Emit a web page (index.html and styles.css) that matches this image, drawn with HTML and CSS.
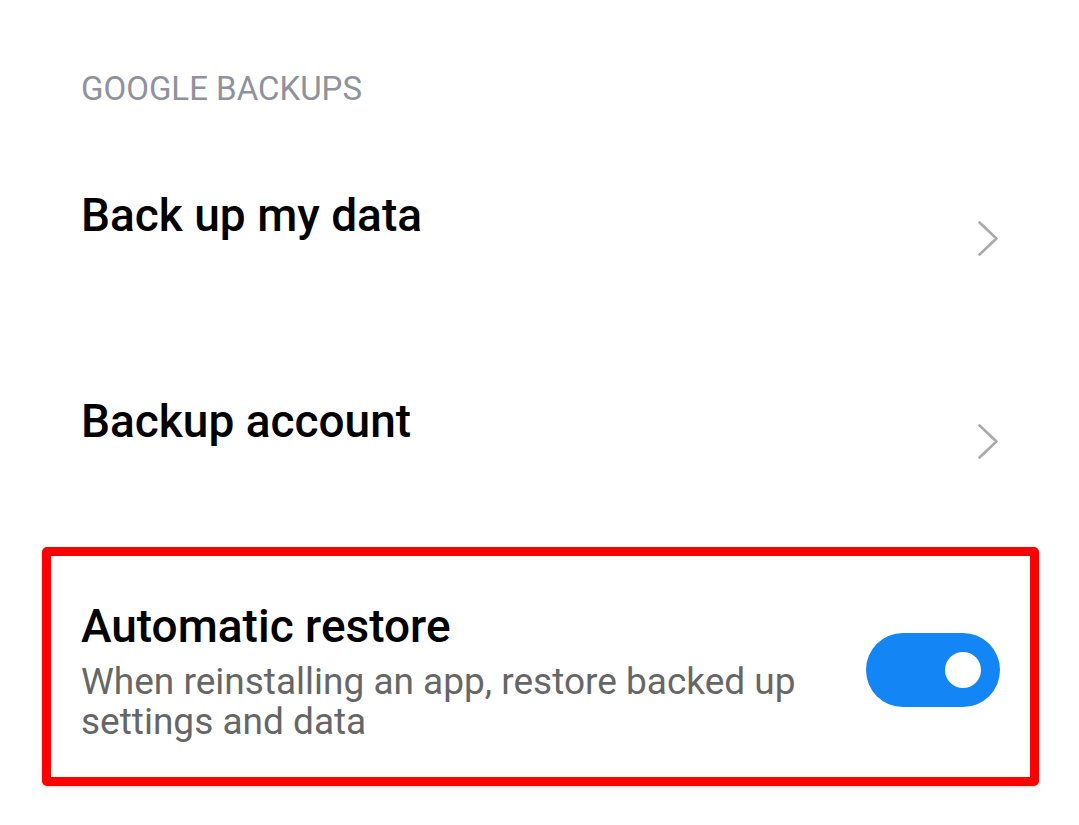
FILE: index.html
```html
<!DOCTYPE html>
<html lang="en">
<head>
<meta charset="utf-8">
<title>Google backups</title>
<link rel="stylesheet" href="styles.css">
</head>
<body>
<div class="screen">
  <div class="section-header">GOOGLE BACKUPS</div>
  <div class="row row-first">
    <div class="row-title">Back up my data</div>
    <svg class="chevron" viewBox="0 0 20 35" width="20" height="35"><polyline points="1.5,1.5 18.5,17.5 1.5,33.5" fill="none" stroke="#aaaaaa" stroke-width="2.6" stroke-linecap="round" stroke-linejoin="round"/></svg>
  </div>
  <div class="row row-second">
    <div class="row-title">Backup account</div>
    <svg class="chevron" viewBox="0 0 20 35" width="20" height="35"><polyline points="1.5,1.5 18.5,17.5 1.5,33.5" fill="none" stroke="#aaaaaa" stroke-width="2.6" stroke-linecap="round" stroke-linejoin="round"/></svg>
  </div>
  <div class="highlight">
    <div class="toggle-row">
      <div class="toggle-text">
        <div class="toggle-title">Automatic restore</div>
        <div class="toggle-sub">When reinstalling an app, restore backed up settings and data</div>
      </div>
      <div class="switch on"><span class="knob"></span></div>
    </div>
  </div>
</div>
</body>
</html>
```

FILE: styles.css
```css
html, body {
  margin: 0;
  padding: 0;
  background: #ffffff;
}
body {
  font-family: Roboto, "Noto Sans", sans-serif;
  width: 1079px;
  height: 825px;
  overflow: hidden;
}
.section-header {
  padding: 68px 81px 0;
  font-size: 33px;
  line-height: 42px;
  color: #8e929c;
}
.row {
  display: flex;
  align-items: flex-start;
  justify-content: space-between;
  padding: 0 81px;
}
.row-first {
  margin-top: 78px;
}
.row-second {
  margin-top: 138px;
}
.row-title {
  font-size: 46px;
  line-height: 54px;
  font-weight: 500;
  color: #000000;
}
.chevron {
  display: block;
  flex: none;
}
.row-first .chevron {
  margin-top: 33px;
}
.row-second .chevron {
  margin-top: 30px;
}
.highlight {
  margin: 88px 40px 0 42px;
  border: 9px solid #ff0000;
  border-radius: 5px;
  box-shadow: 0 1px 3px rgba(0, 0, 0, 0.18);
}
.toggle-row {
  display: flex;
  align-items: center;
  gap: 36px;
  padding: 44px 30px 35px 30px;
}
.toggle-text {
  flex: 1;
  min-width: 0;
}
.toggle-title {
  font-size: 46px;
  line-height: 52px;
  font-weight: 500;
  color: #000000;
}
.toggle-sub {
  margin-top: 10px;
  font-size: 37px;
  line-height: 40px;
  color: #666666;
}
.switch {
  flex: none;
  width: 134px;
  height: 74px;
  border-radius: 37px;
  background: #1485f5;
  display: flex;
  align-items: center;
  justify-content: flex-end;
  padding-right: 19px;
  box-sizing: border-box;
  margin-top: -2px;
}
.knob {
  width: 36px;
  height: 36px;
  border-radius: 50%;
  background: #ffffff;
}
```
